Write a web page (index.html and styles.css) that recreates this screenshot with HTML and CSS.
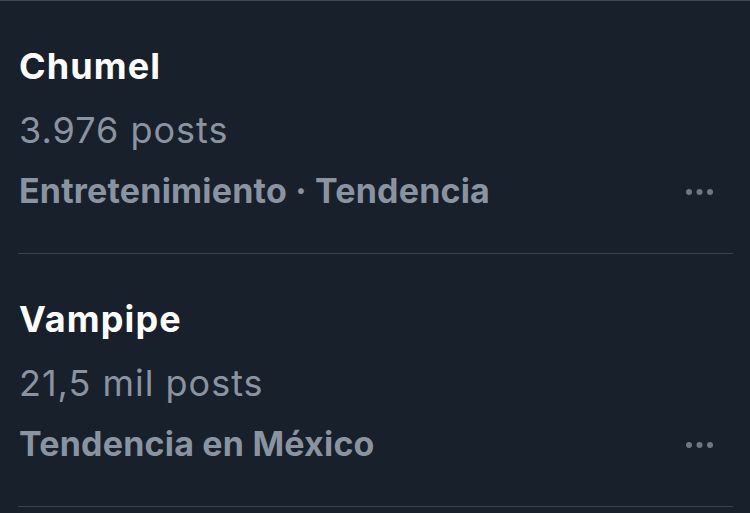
FILE: index.html
```html
<!DOCTYPE html>
<html lang="es">
<head>
<meta charset="utf-8">
<link rel="stylesheet" href="styles.css">
</head>
<body>
<div class="panel">
  <div class="trend">
    <div class="trend-inner">
      <div class="title">Chumel</div>
      <div class="count">3.976 posts</div>
      <div class="meta-row">
        <span class="meta">Entretenimiento · Tendencia</span>
        <svg class="more" width="30" height="8" viewBox="0 0 30 8"><circle cx="6" cy="4" r="3"/><circle cx="16.5" cy="4" r="3"/><circle cx="27" cy="4" r="3"/></svg>
      </div>
    </div>
  </div>
  <div class="trend">
    <div class="trend-inner">
      <div class="title">Vampipe</div>
      <div class="count">21,5 mil posts</div>
      <div class="meta-row">
        <span class="meta">Tendencia en México</span>
        <svg class="more" width="30" height="8" viewBox="0 0 30 8"><circle cx="6" cy="4" r="3"/><circle cx="16.5" cy="4" r="3"/><circle cx="27" cy="4" r="3"/></svg>
      </div>
    </div>
  </div>
</div>
</body>
</html>
```
FILE: styles.css
```css
html, body {
  margin: 0;
  padding: 0;
  background: #18202b;
}
body {
  font-family: Inter, "Liberation Sans", sans-serif;
  width: 750px;
  height: 513px;
  overflow: hidden;
}
.panel {
  border-top: 1px solid #414852;
  background: #18202b;
}
.trend {
  padding: 0 17px 0 18px;
}
.trend-inner {
  padding: 43px 0 42px 1px;
  border-bottom: 1px solid #3b424c;
}
.title {
  font-size: 36px;
  font-weight: 700;
  line-height: 44px;
  color: #ffffff;
  letter-spacing: 1.1px;
}
.count {
  margin-top: 14px;
  font-size: 36px;
  font-weight: 400;
  line-height: 56px;
  color: #8a94a1;
  letter-spacing: 1px;
}
.meta-row {
  margin-top: 13px;
  display: flex;
  align-items: center;
  justify-content: space-between;
  height: 40px;
}
.meta {
  font-size: 34px;
  font-weight: 700;
  line-height: 40px;
  color: #8a94a1;
  letter-spacing: 0.2px;
}
.more {
  fill: #6e7782;
  margin-right: 20px;
  margin-top: 1px;
}
```
